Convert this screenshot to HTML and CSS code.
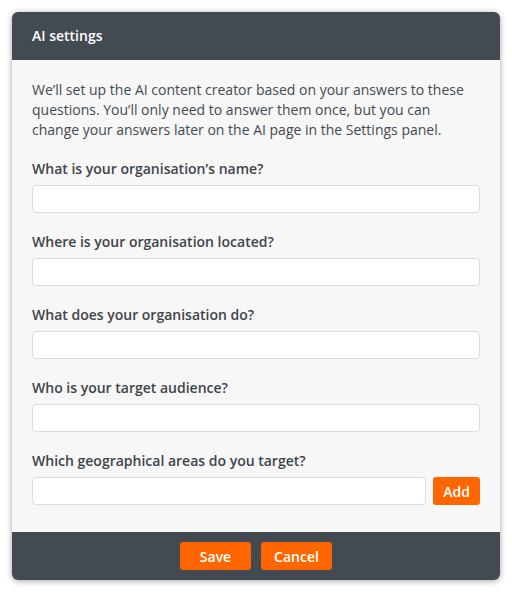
FILE: index.html
```html
<!DOCTYPE html>
<html>
<head>
<meta charset="utf-8">
<link rel="stylesheet" href="styles.css">
</head>
<body>
<div class="dialog">
  <div class="dialog-header">AI settings</div>
  <div class="dialog-body">
    <p class="intro">We’ll set up the AI content creator based on your answers to these questions. You’ll only need to answer them once, but you can change your answers later on the AI page in the Settings panel.</p>
    <div class="field">
      <label class="label">What is your organisation’s name?</label>
      <input class="input" type="text">
    </div>
    <div class="field">
      <label class="label">Where is your organisation located?</label>
      <input class="input" type="text">
    </div>
    <div class="field">
      <label class="label">What does your organisation do?</label>
      <input class="input" type="text">
    </div>
    <div class="field">
      <label class="label">Who is your target audience?</label>
      <input class="input" type="text">
    </div>
    <div class="field">
      <label class="label">Which geographical areas do you target?</label>
      <div class="input-row">
        <input class="input" type="text">
        <button class="btn btn-add">Add</button>
      </div>
    </div>
  </div>
  <div class="dialog-footer">
    <button class="btn btn-footer">Save</button>
    <button class="btn btn-footer">Cancel</button>
  </div>
</div>
</body>
</html>
```
FILE: styles.css
```css
* { box-sizing: border-box; }
html, body { margin: 0; background: #ffffff; }
body {
  padding: 12px;
  font-family: "Open Sans", "DejaVu Sans", sans-serif;
  font-size: 14px;
  line-height: 20px;
  color: #444a50;
}
.dialog {
  width: 488px;
  height: 568px;
  border-radius: 6px;
  overflow: hidden;
  background: #f7f7f7;
  box-shadow: 0 1px 6px rgba(0,0,0,0.35);
  display: flex;
  flex-direction: column;
}
.dialog-header {
  height: 48px;
  background: #434a52;
  color: #ffffff;
  font-weight: 600;
  padding: 0 20px;
  display: flex;
  align-items: center;
}
.dialog-body {
  flex: 1;
  padding: 20px 20px 0;
}
.intro {
  margin: 0;
  color: #444a50;
}
.field {
  margin-top: 19px;
  display: flex;
  flex-direction: column;
  gap: 6px;
}
.label {
  font-weight: 600;
  color: #3e444b;
}
.input {
  display: block;
  width: 100%;
  height: 28px;
  border: 1px solid #dcdcdc;
  border-radius: 4px;
  background: #ffffff;
  font: inherit;
  padding: 0 8px;
  outline: none;
}
.input-row {
  display: flex;
  gap: 7px;
}
.input-row .input { flex: 1; width: auto; }
.btn {
  height: 28px;
  border: 0;
  border-radius: 3px;
  background: #ff6600;
  color: #ffffff;
  font-family: inherit;
  font-size: 14px;
  font-weight: 600;
  padding: 0;
  cursor: pointer;
}
.btn-add { width: 47px; }
.dialog-footer {
  height: 48px;
  background: #434a52;
  display: flex;
  justify-content: center;
  align-items: center;
  gap: 10px;
}
.btn-footer { width: 71px; }
```
